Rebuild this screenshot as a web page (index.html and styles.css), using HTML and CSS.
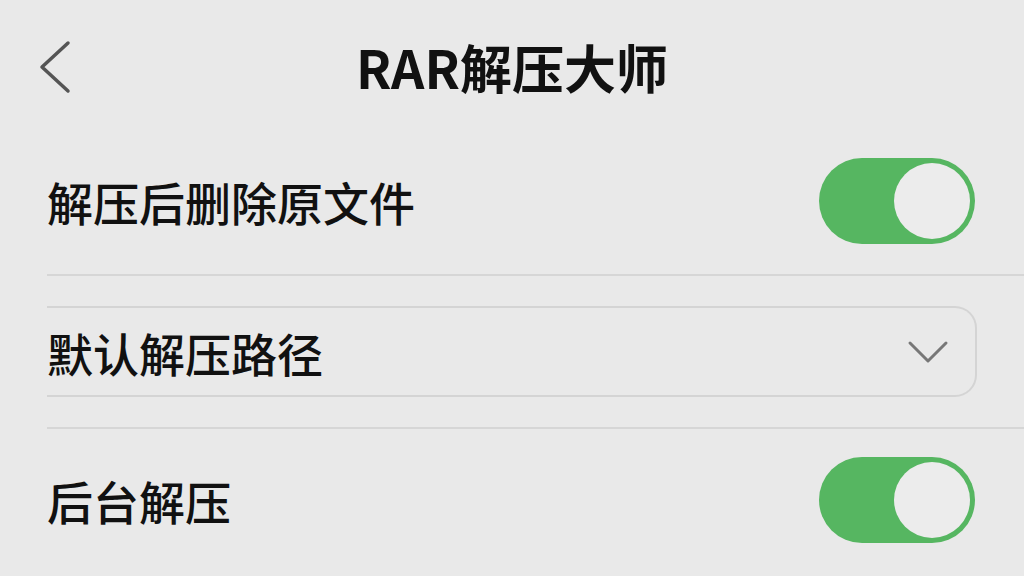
FILE: index.html
```html
<!DOCTYPE html>
<html lang="zh-CN">
<head>
    <meta charset="UTF-8">
    <meta name="viewport" content="width=device-width, initial-scale=1.0">
    <title>RAR解压大师</title>
    <link rel="stylesheet" href="styles.css">
</head>
<body>
    <div class="page">
        <div class="header">
            <button class="back" aria-label="返回">
                <svg width="34" height="54" viewBox="0 0 34 54">
                    <path d="M30 3 L4 27 L30 51" fill="none" stroke="#555" stroke-width="3.5" stroke-linecap="round" stroke-linejoin="round"/>
                </svg>
            </button>
            <h1>RAR解压大师</h1>
            <div></div>
        </div>

        <div class="row">
            <span class="label">解压后删除原文件</span>
            <div class="switch on"><div class="knob"></div></div>
        </div>
        <div class="divider"></div>

        <div class="select-wrap">
            <div class="select">
                <span class="label">默认解压路径</span>
                <svg width="42" height="26" viewBox="0 0 42 26">
                    <path d="M3 4 L21 22 L39 4" fill="none" stroke="#777" stroke-width="3" stroke-linecap="round" stroke-linejoin="round"/>
                </svg>
            </div>
        </div>
        <div class="divider"></div>

        <div class="row last">
            <span class="label">后台解压</span>
            <div class="switch on"><div class="knob"></div></div>
        </div>
    </div>
</body>
</html>
```

FILE: styles.css
```css
body {
    margin: 0;
    background: #e9e9e9;
    font-family: "Noto Sans CJK SC", "Noto Sans", sans-serif;
    color: #111;
    overflow: hidden;
}
.page {
    width: 1024px;
    height: 576px;
}
.header {
    height: 128px;
    display: grid;
    grid-template-columns: 1fr auto 1fr;
    align-items: center;
    padding: 6px 38px 0 38px;
    box-sizing: border-box;
}
.back {
    background: none;
    border: none;
    padding: 0;
    width: 34px;
    height: 54px;
    cursor: pointer;
    justify-self: start;
}
.back svg {
    display: block;
}
h1 {
    margin: 0;
    font-size: 52px;
    font-weight: 700;
    line-height: 1.2;
}
.row {
    height: 146px;
    display: flex;
    align-items: center;
    justify-content: space-between;
    padding: 0 49px 0 47px;
}
.row.last {
    height: 142px;
}
.label {
    font-size: 46px;
    font-weight: 500;
    line-height: 1;
}
.switch {
    width: 156px;
    height: 86px;
    border-radius: 43px;
    background: #56b661;
    position: relative;
}
.switch .knob {
    position: absolute;
    top: 5px;
    right: 5px;
    width: 76px;
    height: 76px;
    border-radius: 50%;
    background: #ececec;
}
.divider {
    height: 2px;
    background: #d6d6d6;
    margin-left: 47px;
}
.select-wrap {
    padding: 30px 47px 30px 47px;
}
.select {
    height: 87px;
    border: 2px solid #d4d4d4;
    border-left: none;
    border-radius: 0 22px 22px 0;
    display: flex;
    align-items: center;
    justify-content: space-between;
    padding-right: 26px;
}
.select svg {
    display: block;
}
```
